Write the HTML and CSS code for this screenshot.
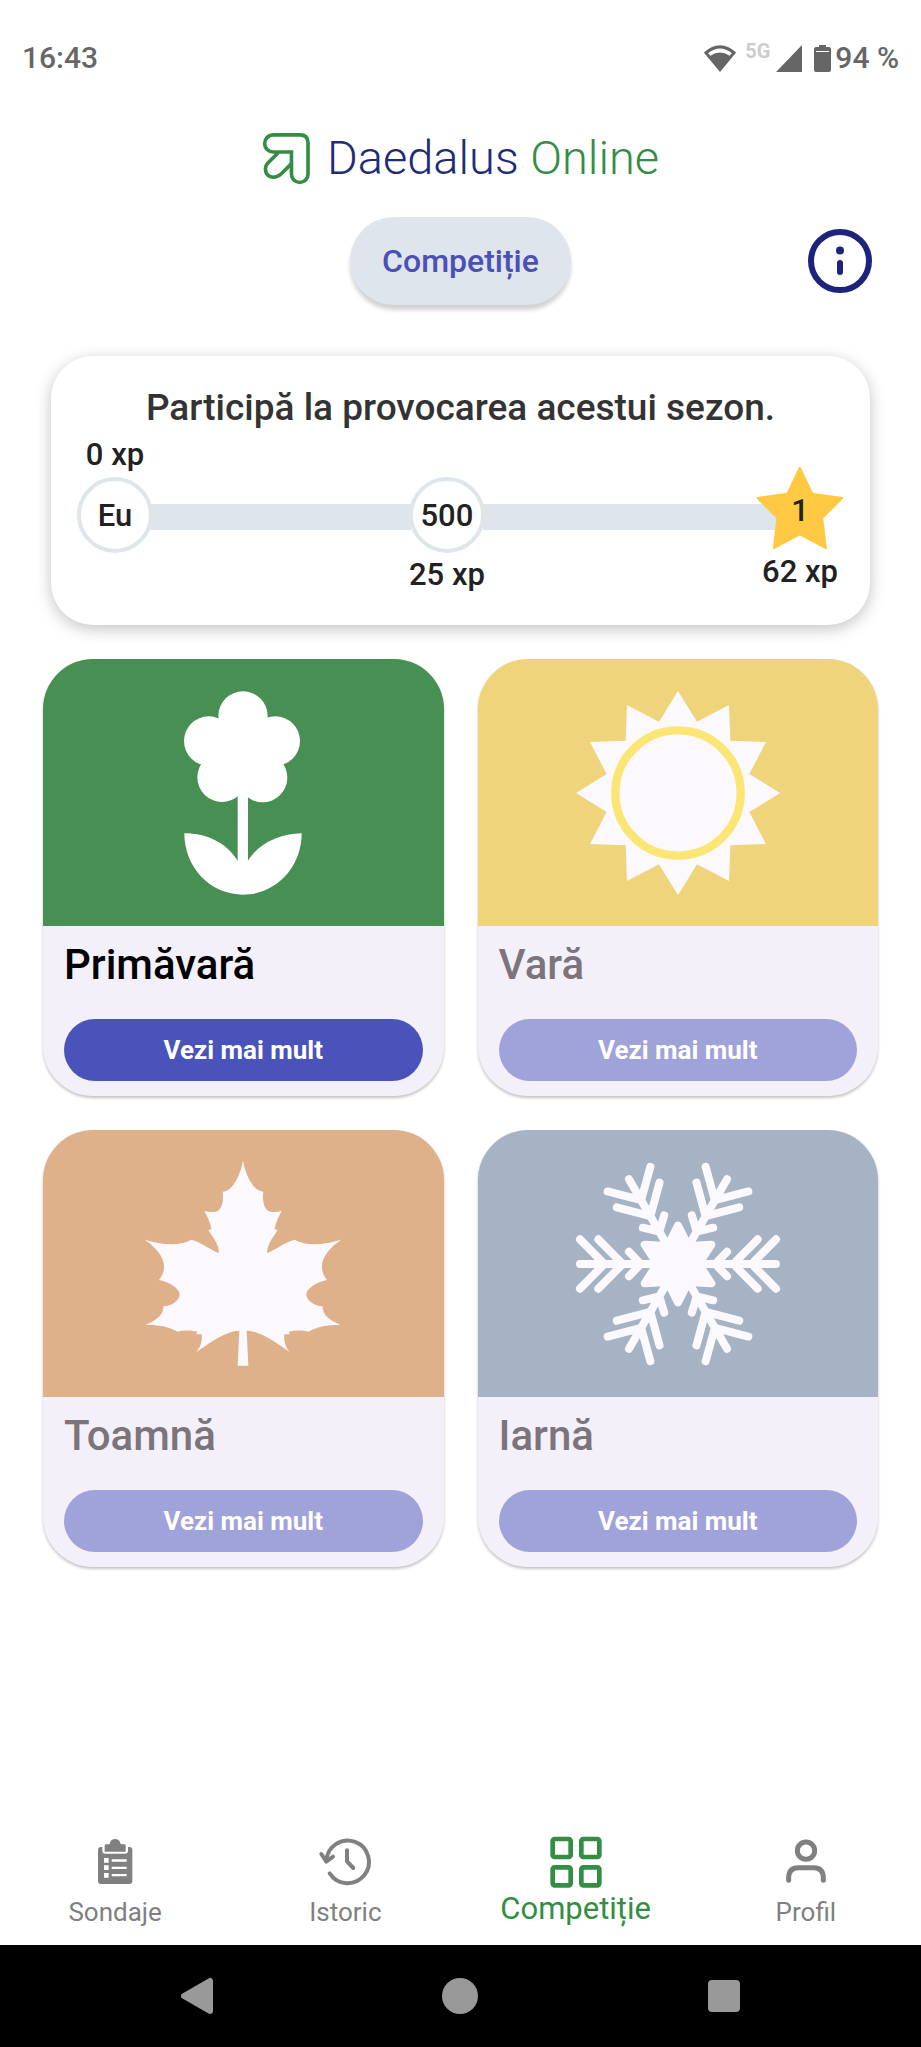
FILE: index.html
```html
<!DOCTYPE html>
<html lang="ro">
<head>
<meta charset="utf-8">
<meta name="viewport" content="width=device-width, initial-scale=1">
<title>Daedalus Online – Competiție</title>
<link rel="stylesheet" href="styles.css">
</head>
<body>
<div class="status-bar">
  <span>16:43</span>
  <div class="status-icons">
    <svg class="wifi" viewBox="729 64 102 88" aria-hidden="true"><path fill="#666" d="M731 90Q780 46 829 90L780 149Z"/><path fill="#fff" d="M744 92Q780 64 816 92L809 100Q780 79 751 100Z"/></svg>
    <span class="network">5G</span>
    <svg class="signal" viewBox="0 0 26 27" aria-hidden="true"><path fill="#666" d="M26 0V27H0Z"/></svg>
    <svg class="battery" viewBox="0 0 17 27" aria-hidden="true"><path fill="#666" d="M5 0H12V2H15Q17 2 17 4V25Q17 27 15 27H2Q0 27 0 25V4Q0 2 2 2H5Z"/><path stroke="#fff" d="M2 6.500H15"/></svg>
    <span>94 %</span>
  </div>
</div>

<header class="header">
  <div class="logo">
    <svg class="logo-mark" viewBox="788 333 148 156" fill="none" stroke="#338d43" stroke-width="11" aria-hidden="true"><path d="M822 341H903Q927 341 927 365V460A25 25 0 0 1 877 460V393H822A26 26 0 0 1 822 341Z"/><path d="M837 395L808 424C790 442 799 468 822 469C832 469 838 466 845 460L877 428"/></svg>
    <span class="logo-text">Daedalus <span class="logo-accent">Online</span></span>
  </div>
  <div class="toolbar">
    <button class="mode" type="button">Competiție</button>
    <button class="info" type="button" aria-label="Informații">
      <svg viewBox="0 0 64 64" fill="none" stroke="#1c237c" aria-hidden="true"><circle cx="32" cy="32" r="29" stroke-width="6"/><path stroke-width="6" stroke-linecap="round" d="M32 34V43"/><circle cx="32" cy="21.500" r="4" fill="#1c237c" stroke="none"/></svg>
    </button>
  </div>
</header>

<main class="main">
  <section class="challenge">
    <h1 class="challenge-title">Participă la provocarea acestui sezon.</h1>
    <div class="progress">
      <div class="stop">
        <span class="xp">0 xp</span>
        <span class="node">Eu</span>
      </div>
      <div class="line"></div>
      <div class="stop stop-end">
        <span class="node">500</span>
        <span class="xp">25 xp</span>
      </div>
      <div class="line line-last"></div>
      <div class="stop stop-star">
        <div class="star">
          <svg viewBox="861 376 263 252" aria-hidden="true"><path fill="#ffc944" stroke="#ffc944" stroke-width="6" stroke-linejoin="round" d="M992 381L1029 459L1119 472L1059 532L1070 622L992 581L914 622L925 532L865 472L955 459Z"/></svg>
          <span class="rank">1</span>
        </div>
        <span class="xp">62 xp</span>
      </div>
    </div>
  </section>

  <section class="seasons">
    <article class="season">
      <div class="art art-spring">
        <svg viewBox="333 121 612 612" fill="#fff" aria-hidden="true"><circle cx="639" cy="196" r="74"/><circle cx="536" cy="271" r="74"/><circle cx="736" cy="271" r="74"/><circle cx="576" cy="380" r="74"/><circle cx="698" cy="381" r="74"/><circle cx="639" cy="300" r="90"/><path d="M623 400H654V640H623Z"/><path d="M463 548C463 650 540 732 639 732C738 732 815 650 815 548C745 550 685 580 654 630H623C590 578 533 548 463 548Z"/></svg>
      </div>
      <div class="season-body">
        <h2 class="season-name">Primăvară</h2>
        <button class="more" type="button">Vezi mai mult</button>
      </div>
    </article>
    <article class="season">
      <div class="art art-summer">
        <svg viewBox="-306 -306 612 612" aria-hidden="true"><path fill="#fcf9fe" d="M0-306L57-214L153-264L157-157L264-153L214-57L306 0L214 57L264 153L157 157L153 264L57 214L0 306L-57 214L-153 264L-157 157L-264 153L-214 57L-306 0L-214-57L-264-153L-157-157L-153-264L-57-214Z"/><circle r="188" fill="none" stroke="#fbe574" stroke-width="25"/></svg>
      </div>
      <div class="season-body">
        <h2 class="season-name season-locked">Vară</h2>
        <button class="more" type="button" disabled>Vezi mai mult</button>
      </div>
    </article>
    <article class="season">
      <div class="art art-autumn">
        <svg viewBox="333 124 612 612" fill="#fcf9fe" aria-hidden="true"><path id="half-leaf" d="M640 124H639C628 170 606 213 578 213C581 240 578 270 554 274Q538 275 523 271C532 290 540 300 544 326L535 328C552 355 566 370 567 397C540 388 515 365 484 357C450 378 390 372 345 357C385 385 425 430 387 478C420 484 449 505 449 521C449 540 425 557 400 557C402 585 375 600 347 613C390 612 420 620 443 633C465 627 485 630 502 633L499 641L515 641C517 665 510 680 499 694C540 665 590 630 628 630L623 735H640Z"/><use href="#half-leaf" transform="matrix(-1 0 0 1 1278 0)"/></svg>
      </div>
      <div class="season-body">
        <h2 class="season-name season-locked">Toamnă</h2>
        <button class="more" type="button" disabled>Vezi mai mult</button>
      </div>
    </article>
    <article class="season">
      <div class="art art-winter">
        <svg viewBox="-306 -306 612 612" fill="none" stroke="#fcf9fe" stroke-width="24" stroke-linecap="round" stroke-linejoin="round" aria-hidden="true"><g id="arm"><path d="M0 0H294M294-74L221 0L294 74M239-74L166 0L239 74M147-37L112 0L147 37"/></g><use href="#arm" transform="rotate(60)"/><use href="#arm" transform="rotate(120)"/><use href="#arm" transform="rotate(180)"/><use href="#arm" transform="rotate(240)"/><use href="#arm" transform="rotate(300)"/><path fill="#fcf9fe" d="M0-115L31-54L100-58L62 0L100 58L31 54L0 115L-31 54L-100 58L-62 0L-100-58L-31-54Z"/></svg>
      </div>
      <div class="season-body">
        <h2 class="season-name season-locked">Iarnă</h2>
        <button class="more" type="button" disabled>Vezi mai mult</button>
      </div>
    </article>
  </section>
</main>

<nav class="tabs">
  <a class="tab" href="#sondaje">
    <svg viewBox="267 78 156 156" aria-hidden="true"><path fill="#808080" d="M294 120Q294 111 303 111H307V122Q307 131 316 131H375Q384 131 384 122V111H388Q397 111 397 120V213Q397 222 388 222H303Q294 222 294 213ZM314 107Q314 103 319 103H326Q330 103 330 99C332 83 358 83 361 99Q361 103 365 103H373Q377 103 377 107V125H314Z"/><path fill="#fff" d="M312 144H326V158H312ZM312 166H326V180H312ZM312 189H326V203H312ZM335 148H380V155H335ZM335 170H380V177H335ZM335 192H380V199H335Z"/></svg>
    <span class="tab-label">Sondaje</span>
  </a>
  <a class="tab" href="#istoric">
    <svg viewBox="959 78 156 156" fill="none" stroke="#808080" stroke-width="12" stroke-linecap="round" stroke-linejoin="round" aria-hidden="true"><path d="M991 190A64 64 0 1 0 981 153M966 132L981 155L1001 140M1043 121V154L1062 174"/></svg>
    <span class="tab-label">Istoric</span>
  </a>
  <a class="tab tab-active" href="#competitie" aria-current="page">
    <svg viewBox="269 76 156 156" fill="none" stroke="#338d43" stroke-width="14" aria-hidden="true"><rect x="277" y="85" width="54" height="54" rx="6"/><rect x="363" y="85" width="54" height="54" rx="6"/><rect x="277" y="170" width="54" height="54" rx="6"/><rect x="363" y="170" width="54" height="54" rx="6"/></svg>
    <span class="tab-label">Competiție</span>
  </a>
  <a class="tab" href="#profil">
    <svg viewBox="960 78 156 156" fill="none" stroke="#808080" stroke-width="15" stroke-linecap="round" aria-hidden="true"><circle cx="1038" cy="122" r="26"/><path d="M986 211V204Q986 173 1015 173H1061Q1090 173 1090 204V211"/></svg>
    <span class="tab-label">Profil</span>
  </a>
</nav>

<div class="system-bar">
  <button class="system-button" type="button" aria-label="Înapoi"><svg viewBox="0 0 36 36" aria-hidden="true"><path fill="#999" stroke="#999" stroke-width="6" stroke-linejoin="round" d="M5 18L31 3V33Z"/></svg></button>
  <button class="system-button" type="button" aria-label="Acasă"><svg viewBox="0 0 36 36" aria-hidden="true"><circle cx="18" cy="18" r="18" fill="#999"/></svg></button>
  <button class="system-button" type="button" aria-label="Recente"><svg viewBox="0 0 36 36" aria-hidden="true"><rect x="2" y="2" width="32" height="32" rx="4" fill="#999"/></svg></button>
</div>
</body>
</html>
```

FILE: styles.css
```css
* {
  box-sizing: border-box;
}

body {
  display: flex;
  flex-direction: column;
  min-height: 100vh;
  margin: 0;
  background: #fff;
  color: #222;
  font-family: Roboto, "Noto Sans", sans-serif;
}

button {
  margin: 0;
  padding: 0;
  border: 0;
  background: none;
  font-family: inherit;
}

svg {
  display: block;
  overflow: visible;
}

/* Status bar */

.status-bar {
  display: flex;
  justify-content: space-between;
  padding: 38px 22px 0;
  color: #666;
  font-size: 30px;
  font-weight: 500;
  line-height: 40px;
}

.status-icons {
  display: flex;
  align-items: center;
}

.wifi {
  width: 34px;
  height: 29px;
}

.network {
  margin: 0 6px 14px 8px;
  color: #ccc;
  font-size: 20px;
  font-weight: 700;
  line-height: 24px;
}

.signal {
  width: 26px;
  height: 27px;
}

.battery {
  width: 17px;
  height: 27px;
  margin: 0 4px 0 12px;
}

/* Header */

.header {
  padding-top: 54px;
}

.logo {
  display: flex;
  justify-content: center;
  align-items: center;
  gap: 16px;
  height: 52px;
}

.logo-mark {
  width: 49px;
  height: 52px;
}

.logo-text {
  color: #1e2c78;
  font-size: 47px;
  font-weight: 300;
  line-height: 52px;
}

.logo-accent {
  color: #338d43;
}

.toolbar {
  display: grid;
  grid-template-columns: 1fr auto 1fr;
  align-items: center;
  margin-top: 33px;
  padding: 0 49px;
}

.mode {
  grid-column: 2;
  height: 88px;
  padding: 0 32px;
  border-radius: 44px;
  background: #dfe5ec;
  box-shadow: 0 5px 4px rgba(0, 0, 0, 0.18);
  color: #4a50b5;
  font-size: 32px;
  font-weight: 500;
}

.info {
  justify-self: end;
  width: 64px;
  height: 64px;
}

/* Season challenge */

.main {
  flex: 1;
  padding: 51px 43px 40px;
}

.challenge {
  margin: 0 8px;
  padding: 32px 26px;
  border-radius: 42px;
  background: #fff;
  box-shadow: 0 4px 16px rgba(0, 0, 0, 0.24);
}

.challenge-title {
  margin: 0 0 9px;
  color: #333;
  font-size: 37px;
  font-weight: 500;
  line-height: 40px;
  text-align: center;
}

.progress {
  display: flex;
  height: 156px;
  font-size: 31px;
  font-weight: 500;
}

.stop {
  position: relative;
  display: flex;
  flex: none;
  flex-direction: column;
  align-items: center;
  gap: 4px;
  width: 76px;
}

.stop-end {
  justify-content: flex-end;
}

.stop-star {
  justify-content: flex-end;
  width: 88px;
  padding-bottom: 3px;
}

.xp {
  line-height: 36px;
  white-space: nowrap;
}

.node {
  display: grid;
  place-items: center;
  width: 76px;
  height: 76px;
  border: 4px solid #dfe6e9;
  border-radius: 50%;
  background: #fff;
}

.line {
  flex: 7;
  height: 26px;
  margin: 67px -2px 0;
  background: #dfe5ec;
}

.line-last {
  flex: 8;
  margin-right: -24px;
}

.star {
  display: grid;
  place-items: center;
}

.star svg,
.rank {
  grid-area: 1 / 1;
}

.star svg {
  width: 88px;
  height: 84px;
}

.rank {
  padding-top: 6px;
  line-height: 36px;
}

/* Season cards */

.seasons {
  display: grid;
  grid-template-columns: 1fr 1fr;
  gap: 34px;
  margin-top: 34px;
}

.season {
  overflow: hidden;
  border-radius: 50px;
  background: #f4f0fa;
  box-shadow: 0 2px 3px rgba(0, 0, 0, 0.24);
}

.art {
  display: grid;
  place-items: center;
  height: 267px;
}

.art svg {
  width: 204px;
  height: 204px;
}

.art-spring {
  background: #478f52;
}

.art-summer {
  background: #efd47c;
}

.art-autumn {
  background: #deb18b;
}

.art-winter {
  background: #a5b3c5;
}

.season-body {
  padding: 15px 21px 15px;
}

.season-name {
  margin: 0 0 30px;
  color: #000;
  font-size: 42px;
  font-weight: 500;
  line-height: 48px;
}

.season-locked {
  color: #7b757b;
}

.more {
  width: 100%;
  height: 62px;
  border-radius: 31px;
  background: #4953b9;
  color: #fff;
  font-size: 26px;
  font-weight: 700;
}

.more:disabled {
  background: #a0a2da;
}

/* Bottom tabs */

.tabs {
  display: grid;
  grid-template-columns: repeat(4, 1fr);
  align-items: start;
  padding-bottom: 13px;
}

.tab {
  display: flex;
  flex-direction: column;
  align-items: center;
  gap: 4px;
  color: #808080;
  text-decoration: none;
}

.tab svg {
  width: 52px;
  height: 52px;
}

.tab-label {
  font-size: 26px;
  line-height: 40px;
}

.tab-active {
  color: #338d43;
}

.tab-active .tab-label {
  font-size: 31px;
  line-height: 34px;
}

/* System navigation */

.system-bar {
  display: grid;
  grid-template-columns: repeat(3, 1fr);
  place-items: center;
  height: 102px;
  padding: 0 65px;
  background: #000;
}

.system-button svg {
  width: 36px;
  height: 36px;
}
```
